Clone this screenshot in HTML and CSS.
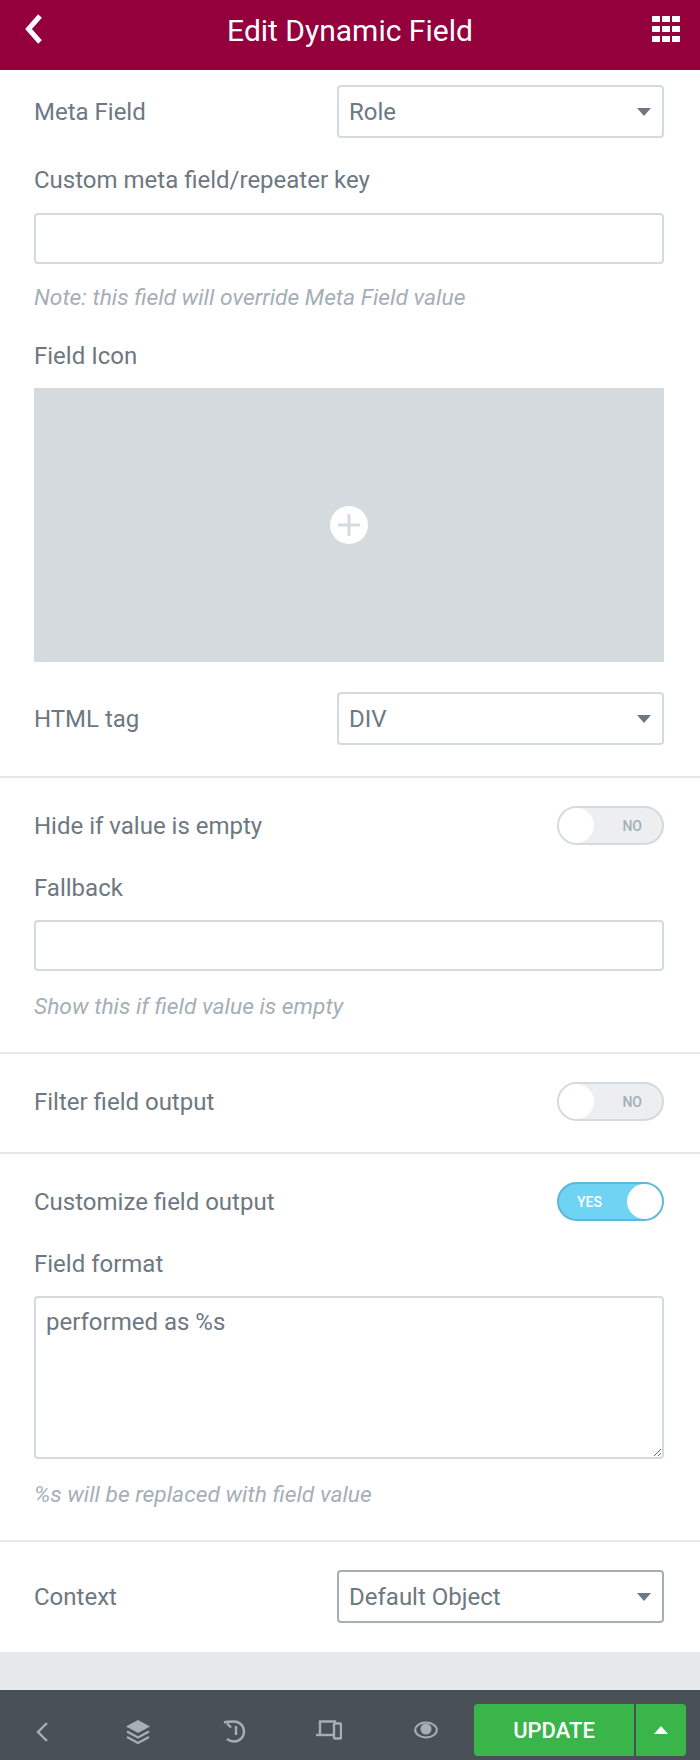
FILE: index.html
```html
<!DOCTYPE html>
<html lang="en">
<head>
    <meta charset="UTF-8">
    <title>Edit Dynamic Field</title>
    <link rel="stylesheet" href="styles.css">
</head>
<body>
    <header class="topbar">
        <svg class="back-icon" viewBox="0 0 18 30"><path d="M15 2 3.5 15 15 28" fill="none" stroke="#fff" stroke-width="5"/></svg>
        <h1>Edit Dynamic Field</h1>
        <div class="grid-icon">
            <i></i><i></i><i></i><i></i><i></i><i></i><i></i><i></i><i></i>
        </div>
    </header>

    <main class="panel">
        <section class="section">
            <div class="row">
                <label>Meta Field</label>
                <div class="select"><span>Role</span><b class="caret"></b></div>
            </div>
            <label class="label-block custom-key">Custom meta field/repeater key</label>
            <input class="text-input" type="text">
            <p class="note">Note: this field will override Meta Field value</p>
            <label class="label-block field-icon">Field Icon</label>
            <div class="media">
                <div class="media-add">
                    <svg viewBox="0 0 22 22"><path d="M11 0v22M0 11h22" stroke="#d5dadf" stroke-width="3"/></svg>
                </div>
            </div>
            <div class="row html-tag">
                <label>HTML tag</label>
                <div class="select"><span>DIV</span><b class="caret"></b></div>
            </div>
        </section>

        <section class="section">
            <div class="row">
                <label>Hide if value is empty</label>
                <div class="switch"><span class="knob"></span><span class="switch-text">NO</span></div>
            </div>
            <label class="label-block fallback">Fallback</label>
            <input class="text-input" type="text">
            <p class="note">Show this if field value is empty</p>
        </section>

        <section class="section section-single">
            <div class="row">
                <label>Filter field output</label>
                <div class="switch"><span class="knob"></span><span class="switch-text">NO</span></div>
            </div>
        </section>

        <section class="section">
            <div class="row">
                <label>Customize field output</label>
                <div class="switch switch-on"><span class="switch-text">YES</span><span class="knob"></span></div>
            </div>
            <label class="label-block fallback">Field format</label>
            <textarea class="text-area">performed as %s</textarea>
            <p class="note">%s will be replaced with field value</p>
        </section>

        <section class="section section-last">
            <div class="row">
                <label>Context</label>
                <div class="select select-focus"><span>Default Object</span><b class="caret"></b></div>
            </div>
        </section>
    </main>

    <div class="spacer"></div>

    <footer class="toolbar">
        <svg class="tool" style="left:36px;width:12px" viewBox="0 0 12 20"><path d="M11 1 2 10l9 9" fill="none" stroke="#a4afb7" stroke-width="2.4"/></svg>
        <svg class="tool" style="left:126px;width:24px" viewBox="0 0 24 24"><path d="M12 0 24 6.5 12 13 0 6.5z" fill="#a4afb7"/><path d="m1 11.5 11 6 11-6M1 17l11 6 11-6" fill="none" stroke="#a4afb7" stroke-width="2.2"/></svg>
        <svg class="tool" style="left:223px;width:24px" viewBox="0 0 24 24"><path d="M1 2.500C4 1.500 7 1.500 11 1.500a10 10 0 1 1 0 20c-3 0-5-1-7-2.500" fill="none" stroke="#a4afb7" stroke-width="2.400"/><path d="M4 3.500 8 7.500M13 6v9" fill="none" stroke="#a4afb7" stroke-width="2.400"/></svg>
        <svg class="tool" style="left:316px;width:26px" viewBox="0 0 26 24"><path d="M4 14V1.500h15V4" fill="none" stroke="#a4afb7" stroke-width="2.400"/><path d="M0 15h17" fill="none" stroke="#a4afb7" stroke-width="2.400"/><rect x="18" y="3.500" width="7" height="15" rx="1" fill="none" stroke="#a4afb7" stroke-width="2.400"/></svg>
        <svg class="tool" style="left:414px;width:24px" viewBox="0 0 24 24"><ellipse cx="12" cy="10" rx="10.800" ry="7.500" fill="none" stroke="#a4afb7" stroke-width="2"/><circle cx="12" cy="9" r="5.500" fill="#a4afb7"/></svg>
        <div class="update">
            <button class="update-main">UPDATE</button>
            <button class="update-more"><b></b></button>
        </div>
    </footer>
</body>
</html>
```

FILE: styles.css
```css
* {
    box-sizing: border-box;
}
html, body {
    margin: 0;
    padding: 0;
}
body {
    font-family: Roboto, Arial, sans-serif;
    color: #6d7882;
    background-color: #e6e9ec;
    width: 700px;
    height: 1760px;
    overflow: hidden;
}
.topbar {
    height: 70px;
    background-color: #93003c;
    display: flex;
    align-items: center;
    justify-content: space-between;
    padding: 0 20px 0 24px;
    color: white;
}
.topbar h1 {
    margin: 0 0 8px 4px;
    font-size: 30px;
    font-weight: 400;
    line-height: 60px;
    height: 60px;
}
.back-icon {
    width: 20px;
    height: 30px;
    margin-bottom: 12px;
}
.grid-icon {
    width: 28px;
    height: 26px;
    display: grid;
    grid-template-columns: repeat(3, 8px);
    grid-template-rows: repeat(3, 6px);
    justify-content: space-between;
    align-content: space-between;
    margin-bottom: 12px;
}
.grid-icon i {
    background: white;
}
.panel {
    height: 1582px;
    background: white;
}
.section {
    padding: 28px 36px 33px 34px;
    border-bottom: 2px solid #e6e9ec;
}
.section:first-child {
    padding-top: 15px;
    padding-bottom: 31px;
}
.section-single {
    padding-bottom: 31px;
}
.section-last {
    border-bottom: none;
}
label {
    font-size: 24px;
    line-height: 24px;
    display: block;
}
.row {
    display: flex;
    align-items: center;
    justify-content: space-between;
}
.select {
    width: 327px;
    height: 53px;
    border: 2px solid #d5dadf;
    border-radius: 4px;
    padding: 0 10px;
    display: flex;
    align-items: center;
    justify-content: space-between;
    font-size: 24px;
}
.select-focus {
    border-color: #a4afb7;
}
.caret {
    width: 0;
    height: 0;
    border-left: 7.500px solid transparent;
    border-right: 7.500px solid transparent;
    border-top: 8px solid #6d7882;
    margin-right: 1px;
}
.label-block {
    margin-top: 31px;
}
.custom-key {
    margin-top: 30px;
}
.field-icon {
    margin-top: 34px;
}
.fallback {
    margin-top: 31px;
}
.text-input {
    display: block;
    width: 100%;
    height: 51px;
    margin-top: 21px;
    border: 2px solid #d5dadf;
    border-radius: 4px;
    outline: none;
}
.fallback + .text-input,
.fallback + .text-area {
    margin-top: 20px;
}
.text-area {
    display: block;
    width: 100%;
    height: 163px;
    padding: 10px 10px;
    border: 2px solid #d5dadf;
    border-radius: 4px;
    font-family: Roboto, Arial, sans-serif;
    font-size: 24px;
    line-height: 28px;
    color: #6d7882;
    outline: none;
}
.note {
    margin: 22px 0 0;
    font-size: 22.800px;
    line-height: 24px;
    font-style: italic;
    color: #a4afb7;
}
.fallback ~ .note {
    margin-top: 24px;
}
.media {
    height: 274px;
    margin-top: 20px;
    background-color: #d5dadf;
    display: flex;
    align-items: center;
    justify-content: center;
}
.media-add {
    width: 38px;
    height: 38px;
    border-radius: 50%;
    background: white;
    display: flex;
    align-items: center;
    justify-content: center;
}
.media-add svg {
    width: 22px;
    height: 22px;
}
.html-tag {
    margin-top: 30px;
}
.switch {
    width: 107px;
    height: 39px;
    border-radius: 20px;
    border: 2px solid #d5dadf;
    background-color: #eceef0;
    display: flex;
    align-items: center;
    justify-content: space-between;
    font-size: 14px;
    font-weight: 500;
    color: #a4afb7;
}
.switch .knob {
    width: 35px;
    height: 35px;
    border-radius: 50%;
    background: white;
}
.switch-text {
    margin-right: 20px;
}
.switch-on {
    background-color: #6fd3f4;
    border-color: #5eb8d8;
    color: white;
}
.switch-on .switch-text {
    margin-right: 0;
    margin-left: 18px;
}
.spacer {
    height: 38px;
}
.toolbar {
    position: relative;
    height: 70px;
    background-color: #495157;
}
.tool {
    position: absolute;
    top: 30px;
    height: 24px;
}
.update {
    position: absolute;
    left: 474px;
    top: 14px;
    display: flex;
    height: 52px;
}
.update button {
    border: none;
    background-color: #39b54a;
    color: white;
    height: 52px;
    padding: 0;
}
.update-main {
    width: 160px;
    margin-right: 2px;
    border-radius: 4px 0 0 4px;
    font-family: Roboto, Arial, sans-serif;
    font-size: 22px;
    font-weight: 500;
}
.update-more {
    width: 50px;
    border-radius: 0 4px 4px 0;
    display: flex;
    align-items: center;
    justify-content: center;
}
.update-more b {
    width: 0;
    height: 0;
    border-left: 7px solid transparent;
    border-right: 7px solid transparent;
    border-bottom: 8px solid white;
}
```
